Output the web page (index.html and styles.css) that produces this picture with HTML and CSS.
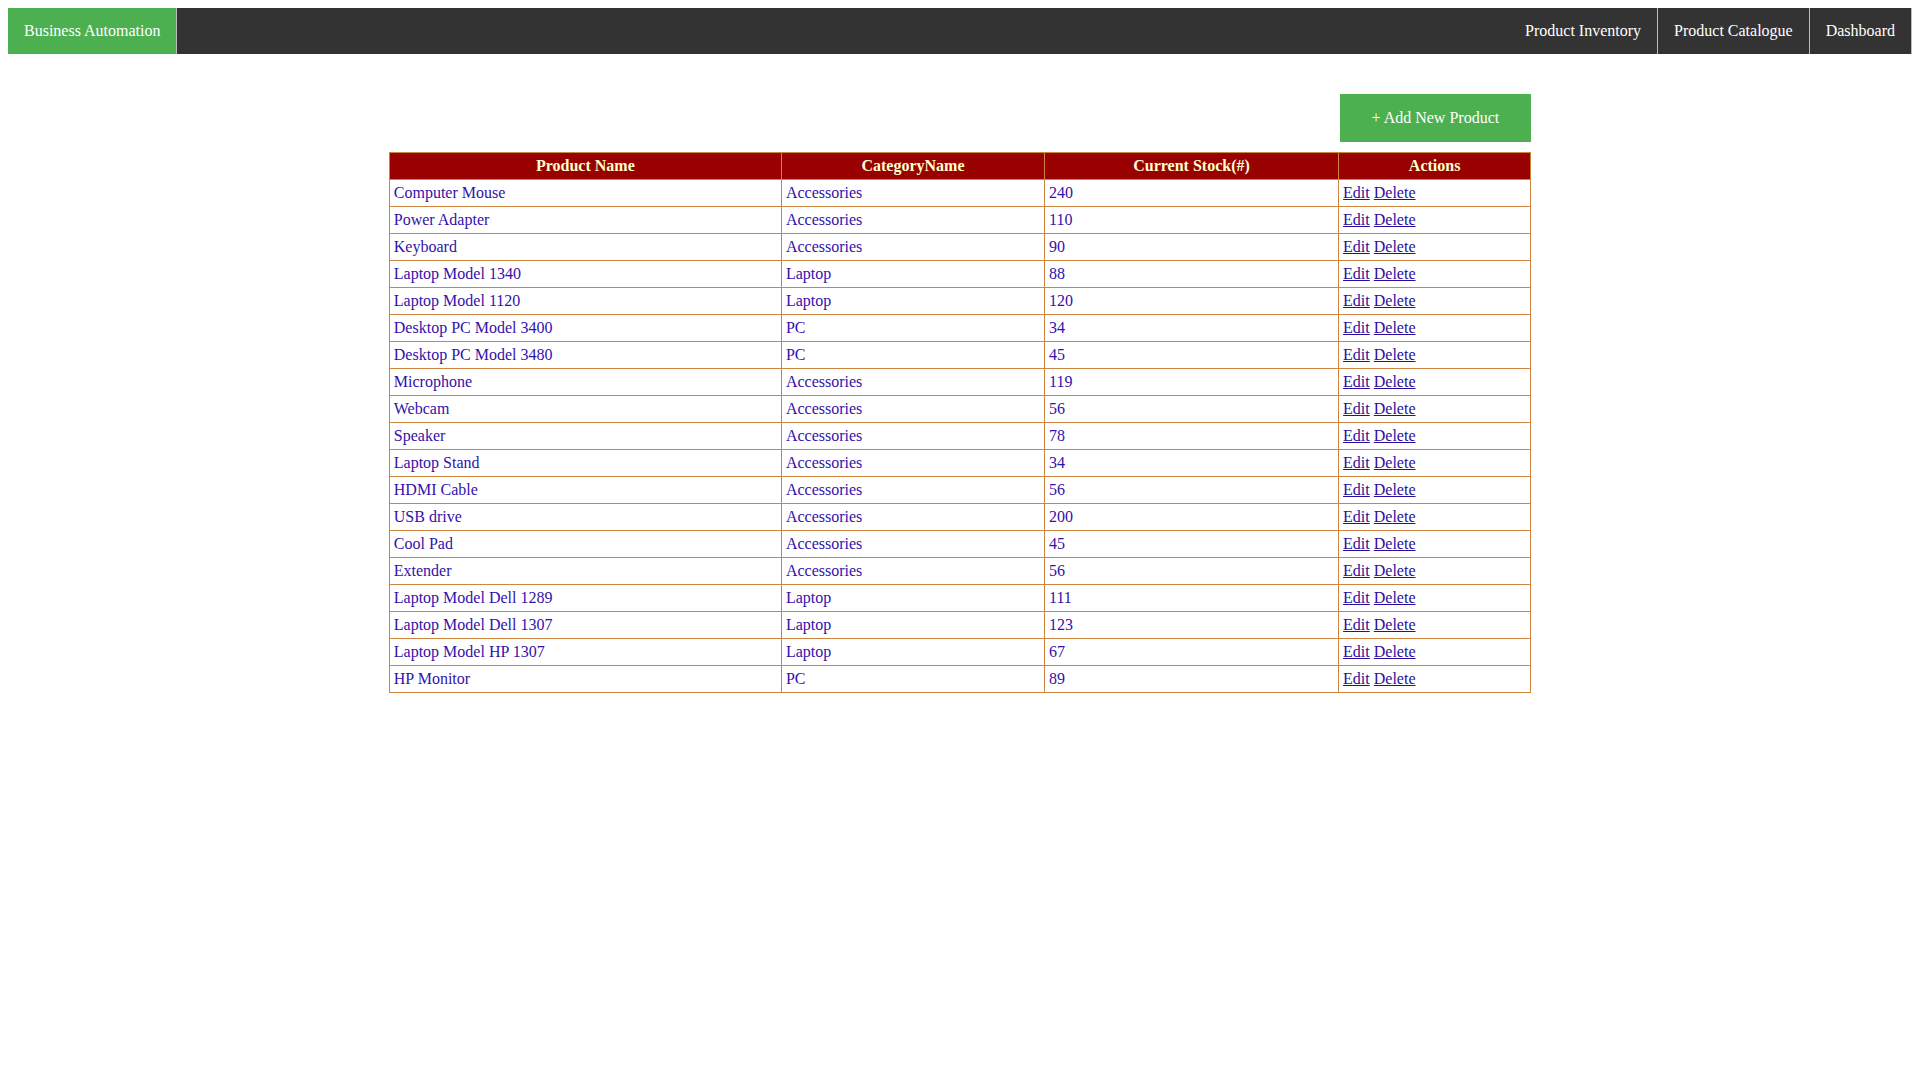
FILE: index.html
```html
<!DOCTYPE html>
<html>
<head>
<meta charset="utf-8">
<title>Product Inventory</title>
<link rel="stylesheet" href="styles.css">
</head>
<body>
<ul class="topnav">
  <li class="brand"><a href="#">Business Automation</a></li>
  <li class="right"><a href="#">Dashboard</a></li>
  <li class="right"><a href="#">Product Catalogue</a></li>
  <li class="right"><a href="#">Product Inventory</a></li>
</ul>
<div class="content">
  <div class="toolbar"><button class="add-btn">+ Add New Product</button></div>
  <table class="products">
    <colgroup>
      <col class="c-name"><col class="c-cat"><col class="c-stock"><col class="c-act">
    </colgroup>
    <thead>
      <tr><th>Product Name</th><th>CategoryName</th><th>Current Stock(#)</th><th>Actions</th></tr>
    </thead>
    <tbody>
      <tr><td>Computer Mouse</td><td>Accessories</td><td>240</td><td><a href="#">Edit</a> <a href="#">Delete</a></td></tr>
      <tr><td>Power Adapter</td><td>Accessories</td><td>110</td><td><a href="#">Edit</a> <a href="#">Delete</a></td></tr>
      <tr><td>Keyboard</td><td>Accessories</td><td>90</td><td><a href="#">Edit</a> <a href="#">Delete</a></td></tr>
      <tr><td>Laptop Model 1340</td><td>Laptop</td><td>88</td><td><a href="#">Edit</a> <a href="#">Delete</a></td></tr>
      <tr><td>Laptop Model 1120</td><td>Laptop</td><td>120</td><td><a href="#">Edit</a> <a href="#">Delete</a></td></tr>
      <tr><td>Desktop PC Model 3400</td><td>PC</td><td>34</td><td><a href="#">Edit</a> <a href="#">Delete</a></td></tr>
      <tr><td>Desktop PC Model 3480</td><td>PC</td><td>45</td><td><a href="#">Edit</a> <a href="#">Delete</a></td></tr>
      <tr><td>Microphone</td><td>Accessories</td><td>119</td><td><a href="#">Edit</a> <a href="#">Delete</a></td></tr>
      <tr><td>Webcam</td><td>Accessories</td><td>56</td><td><a href="#">Edit</a> <a href="#">Delete</a></td></tr>
      <tr><td>Speaker</td><td>Accessories</td><td>78</td><td><a href="#">Edit</a> <a href="#">Delete</a></td></tr>
      <tr><td>Laptop Stand</td><td>Accessories</td><td>34</td><td><a href="#">Edit</a> <a href="#">Delete</a></td></tr>
      <tr><td>HDMI Cable</td><td>Accessories</td><td>56</td><td><a href="#">Edit</a> <a href="#">Delete</a></td></tr>
      <tr><td>USB drive</td><td>Accessories</td><td>200</td><td><a href="#">Edit</a> <a href="#">Delete</a></td></tr>
      <tr><td>Cool Pad</td><td>Accessories</td><td>45</td><td><a href="#">Edit</a> <a href="#">Delete</a></td></tr>
      <tr><td>Extender</td><td>Accessories</td><td>56</td><td><a href="#">Edit</a> <a href="#">Delete</a></td></tr>
      <tr><td>Laptop Model Dell 1289</td><td>Laptop</td><td>111</td><td><a href="#">Edit</a> <a href="#">Delete</a></td></tr>
      <tr><td>Laptop Model Dell 1307</td><td>Laptop</td><td>123</td><td><a href="#">Edit</a> <a href="#">Delete</a></td></tr>
      <tr><td>Laptop Model HP 1307</td><td>Laptop</td><td>67</td><td><a href="#">Edit</a> <a href="#">Delete</a></td></tr>
      <tr><td>HP Monitor</td><td>PC</td><td>89</td><td><a href="#">Edit</a> <a href="#">Delete</a></td></tr>
    </tbody>
  </table>
</div>
</body>
</html>
```
FILE: styles.css
```css
body {
  margin: 8px;
  font-family: "Liberation Serif", "Times New Roman", serif;
  font-size: 16px;
  background: #ffffff;
}

.topnav {
  list-style: none;
  margin: 0;
  padding: 0;
  background-color: #333333;
  display: flex;
}

.topnav li {
  border-right: 1px solid #bbbbbb;
}

.topnav .brand {
  background-color: #4CAF50;
  margin-right: auto;
}

.topnav li.right:nth-child(2) { order: 3; }
.topnav li.right:nth-child(3) { order: 2; }
.topnav li.right:nth-child(4) { order: 1; }

.topnav a {
  display: block;
  color: #ffffff;
  text-decoration: none;
  padding: 14px 16px;
  line-height: 18px;
  font-size: 16px;
}

.content {
  width: 60%;
  margin: 40px auto 0;
}

.toolbar {
  display: flex;
  justify-content: flex-end;
  margin-bottom: 10px;
}

.add-btn {
  background-color: #4CAF50;
  color: #ffffff;
  border: none;
  padding: 15px 32px;
  font-family: "Liberation Serif", "Times New Roman", serif;
  font-size: 16px;
  line-height: 18px;
  cursor: pointer;
}

.products {
  width: 100%;
  border-collapse: collapse;
  table-layout: fixed;
}

.c-name { width: 392px; }
.c-cat { width: 263px; }
.c-stock { width: 294px; }
.c-act { width: 192px; }

.products th,
.products td {
  border: 1px solid #CD853F;
  padding: 4px;
  line-height: 18px;
  font-size: 16px;
}

.products th {
  background-color: #990000;
  color: #FFFFCC;
  font-weight: bold;
  text-align: center;
}

.products td {
  color: #3311aa;
  text-align: left;
}

.products a {
  color: #2a0d9e;
}
```
